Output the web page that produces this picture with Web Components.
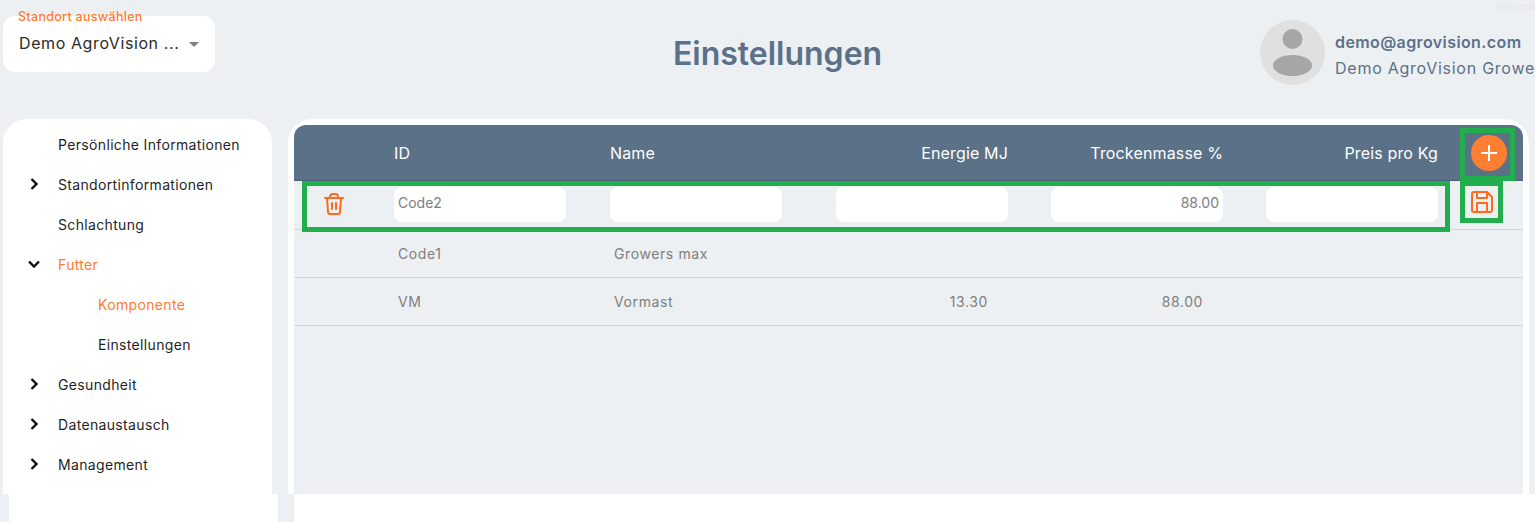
<!DOCTYPE html>
<html lang="de">
<head>
<meta charset="utf-8">
<title>Einstellungen</title>
<style>
  html, body { margin: 0; height: 100%; overflow: hidden; }
  body { background: #edf0f3; font-family: Inter, "Liberation Sans", sans-serif; }
</style>
</head>
<body>
<settings-page></settings-page>

<template id="site-select-tpl">
  <style>
    :host { display: block; position: relative; width: 212px; height: 56px; margin: 16px 0 0 3px; background: #fff; border-radius: 12px; box-sizing: border-box; padding: 0 16px; }
    .label { position: absolute; left: 15px; top: -6px; font-size: 12.500px; font-weight: 500; line-height: 14px; color: #ff7a2f; letter-spacing: .3px; white-space: nowrap; }
    .value { display: flex; align-items: center; height: 54px; justify-content: space-between; font-size: 16px; color: #2a2a2a; letter-spacing: .6px; }
    .arrow { width: 0; height: 0; border: 5px solid transparent; border-top-color: #808080; border-bottom: 0; margin: 2px 0 0; }
  </style>
  <span class="label"><slot name="label"></slot></span>
  <div class="value"><span><slot></slot></span><i class="arrow"></i></div>
</template>

<template id="user-badge-tpl">
  <style>
    :host { display: flex; align-items: center; gap: 10px; width: 275px; height: 65px; margin-top: 20px; overflow: hidden; white-space: nowrap; }
    svg { flex: none; width: 65px; height: 65px; }
    .text { padding-top: 4px; }
    .mail { font-size: 16px; font-weight: 600; line-height: 24px; color: #5a7189; letter-spacing: .4px; }
    .org { font-size: 16px; line-height: 24px; color: #5a7189; margin-top: 2px; letter-spacing: .75px; }
  </style>
  <svg viewBox="0 0 65 65"><circle cx="32.5" cy="32.5" r="32.5" fill="#e0e0e0"/><circle cx="32.5" cy="19" r="10" fill="#a6a6a6"/><ellipse cx="32.5" cy="45.500" rx="19.500" ry="10.500" fill="#a6a6a6"/></svg>
  <div class="text"><div class="mail"><slot name="mail"></slot></div><div class="org"><slot name="org"></slot></div></div>
</template>

<template id="nav-item-tpl">
  <style>
    :host { display: flex; align-items: center; height: 40px; font-size: 14px; color: #1f1f1f; letter-spacing: .34px; }
    :host([active]) { color: #ff7a2f; }
    .icon { flex: none; width: 24px; height: 16px; margin-left: 19px; margin-right: 12px; display: flex; justify-content: center; }
    :host([sub]) .icon { margin-left: 59px; }
    svg { width: 16px; height: 16px; fill: none; stroke: #111; stroke-width: 2.4; display: none; }
    :host([arrow="right"]) .right, :host([arrow="down"]) .down { display: block; }
  </style>
  <span class="icon">
    <svg class="right" viewBox="0 0 16 16"><path d="M5.500 3l5 5-5 5"/></svg>
    <svg class="down" viewBox="0 0 16 16"><path d="M3 5.500l5 5 5-5"/></svg>
  </span>
  <slot></slot>
</template>

<template id="side-nav-tpl">
  <style>
    :host { display: block; width: 269px; margin-left: 3px; padding-top: 5px; background: #fff; border-radius: 24px 24px 0 0; box-sizing: border-box; }
  </style>
  <slot></slot>
</template>

<template id="grid-row-tpl">
  <style>
    :host { display: grid; grid-template-columns: 100px 216px 226px 215px 215px 194px 1fr; align-items: center; box-sizing: border-box; height: 48px; border-bottom: 1px solid #d2d5d8; font-size: 14px; color: #7e7e7e; letter-spacing: .6px; }
    :host([head]) { height: 56px; background: #5a7188; border-bottom: 1px solid #4d6178; color: #fff; font-size: 16px; letter-spacing: .15px; border-radius: 12px 12px 0 0; }
    :host([edit]) { height: 49px; padding-bottom: 2px; letter-spacing: 0; }
  </style>
  <slot></slot>
</template>

<template id="grid-cell-tpl">
  <style>
    :host { display: block; width: 172px; box-sizing: border-box; padding: 0 4px; }
    :host([end]) { text-align: right; padding-right: 20px; }
    :host([head]) { padding: 0; }
    :host([head][end]) { padding: 0; }
  </style>
  <slot></slot>
</template>

<template id="text-box-tpl">
  <style>
    :host { display: block; width: 172px; height: 35px; line-height: 31px; box-sizing: border-box; padding: 0 4px; background: #fff; border-radius: 8px; color: #7e7e7e; font-size: 14px; }
    :host([end]) { text-align: right; }
  </style>
  <slot></slot>
</template>

<template id="mark-box-tpl">
  <style>
    :host { display: block; position: absolute; border: 5px solid #22ae4d; box-sizing: border-box; pointer-events: none; }
  </style>
</template>

<template id="feed-table-tpl">
  <style>
    :host { display: block; position: relative; flex: none; width: 1241px; margin-left: 16px; border: 6px solid #fff; border-bottom: 0; border-radius: 24px 24px 0 0; box-sizing: border-box; }
    .add { display: flex; width: 36px; height: 36px; margin: 1px 0 0 11px; border-radius: 50%; background: #ff7f32; align-items: center; justify-content: center; }
    .add svg { width: 18px; height: 18px; stroke: #fff; stroke-width: 2; fill: none; }
    .ic { width: 24px; height: 24px; fill: none; stroke: #ff6a1f; stroke-width: 2; stroke-linecap: round; stroke-linejoin: round; display: block; }
    .trash { margin-left: 28px; }
    .save { margin-left: 10px; margin-top: -4px; }
    .m1 { left: 8px; top: 56px; width: 1148px; height: 51px; }
    .m2 { left: 1166px; top: 3px; width: 55px; height: 53px; }
    .m3 { left: 1166px; top: 56px; width: 43px; height: 42px; }
  </style>
  <grid-row head>
    <span></span>
    <grid-cell head>ID</grid-cell>
    <grid-cell head>Name</grid-cell>
    <grid-cell head end>Energie MJ</grid-cell>
    <grid-cell head end>Trockenmasse %</grid-cell>
    <grid-cell head end>Preis pro Kg</grid-cell>
    <span class="add"><svg viewBox="0 0 18 18"><path d="M9 1v16M1 9h16"/></svg></span>
  </grid-row>
  <grid-row edit>
    <svg class="ic trash" viewBox="0 0 24 24"><path d="M3 6h18M8 6V4.500A2.500 2.500 0 0 1 10.500 2h3A2.500 2.500 0 0 1 16 4.500V6M5 6l1 14a2 2 0 0 0 2 2h8a2 2 0 0 0 2-2l1-14M10 11v6M14 11v6"/></svg>
    <text-box>Code2</text-box>
    <text-box></text-box>
    <text-box></text-box>
    <text-box end>88.00</text-box>
    <text-box></text-box>
    <svg class="ic save" viewBox="0 0 24 24"><path d="M4 2h13l5 5v13a2 2 0 0 1-2 2H4a2 2 0 0 1-2-2V4a2 2 0 0 1 2-2zM7 2v6h10V2M7 22v-9h10v9"/></svg>
  </grid-row>
  <grid-row>
    <span></span>
    <grid-cell>Code1</grid-cell>
    <grid-cell>Growers max</grid-cell>
  </grid-row>
  <grid-row>
    <span></span>
    <grid-cell>VM</grid-cell>
    <grid-cell>Vormast</grid-cell>
    <grid-cell end>13.30</grid-cell>
    <grid-cell end>88.00</grid-cell>
  </grid-row>
  <mark-box class="m1"></mark-box>
  <mark-box class="m2"></mark-box>
  <mark-box class="m3"></mark-box>
</template>

<template id="settings-page-tpl">
  <style>
    :host { display: grid; grid-template-rows: 119px 375px 28px; height: 522px; position: relative; overflow: hidden; }
    header { display: grid; grid-template-columns: 1fr auto 1fr; }
    h1 { margin: 32px 0 0 20px; font-size: 32px; line-height: 44px; font-weight: 600; color: #5a7189; }
    .right { justify-self: end; }
    main { display: flex; }
    footer { display: flex; }
    .f1 { width: 269px; margin-left: 9px; background: #fff; }
    .f2 { flex: 1; margin-left: 16px; background: #fff; }
    .hint { position: absolute; right: 0; top: 1px; font-size: 9px; color: #e3e6ea; white-space: nowrap; width: 39px; overflow: hidden; }
  </style>
  <header>
    <site-select><span slot="label">Standort auswählen</span>Demo AgroVision ...</site-select>
    <h1>Einstellungen</h1>
    <user-badge class="right"><span slot="mail">demo@agrovision.com</span><span slot="org">Demo AgroVision Growers</span></user-badge>
  </header>
  <main>
    <side-nav>
      <nav-item>Persönliche Informationen</nav-item>
      <nav-item arrow="right">Standortinformationen</nav-item>
      <nav-item>Schlachtung</nav-item>
      <nav-item arrow="down" active>Futter</nav-item>
      <nav-item sub active>Komponente</nav-item>
      <nav-item sub>Einstellungen</nav-item>
      <nav-item arrow="right">Gesundheit</nav-item>
      <nav-item arrow="right">Datenaustausch</nav-item>
      <nav-item arrow="right">Management</nav-item>
    </side-nav>
    <feed-table></feed-table>
  </main>
  <footer><div class="f1"></div><div class="f2"></div></footer>
  <span class="hint">Get application</span>
</template>

<script>
  // every element is just a shadow root cloned from its template
  function define(name) {
    const template = document.getElementById(name + "-tpl");
    customElements.define(name, class extends HTMLElement {
      constructor() {
        super();
        this.attachShadow({ mode: "open" });
        this.shadowRoot.appendChild(template.content.cloneNode(true));
      }
    });
  }

  ["site-select", "user-badge", "nav-item", "side-nav", "grid-row", "grid-cell", "text-box", "mark-box", "feed-table", "settings-page"].forEach(define);
</script>
</body>
</html>
